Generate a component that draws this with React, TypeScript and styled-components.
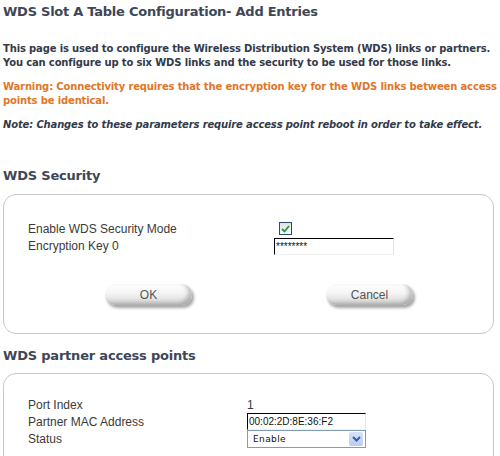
import React from 'react';
import styled, {createGlobalStyle} from 'styled-components';

const GlobalStyle = createGlobalStyle`
  body {
    margin: 0;
    background: #ffffff;
    font-family: "DejaVu Sans", Verdana, sans-serif;
  }
`;

const Page = styled.div`
  width: 500px;
  padding: 3px 0 0 3px;
  box-sizing: border-box;
`;

const Title = styled.h1`
  margin: 0;
  font-family: "DejaVu Sans", sans-serif;
  font-size: 13px;
  font-weight: bold;
  color: #3d4758;
  letter-spacing: -0.25px;
  line-height: 18px;
`;

const Para = styled.p<{tone?: string; italic?: boolean}>`
  margin: 0;
  font-family: "DejaVu Sans", sans-serif;
  font-size: 10px;
  font-weight: bold;
  line-height: 14px;
  letter-spacing: -0.15px;
  color: ${(p) => p.tone || '#333a48'};
  font-style: ${(p) => (p.italic ? 'italic' : 'normal')};
`;

const Intro = styled.div`
  margin-top: 21px;
  display: flex;
  flex-direction: column;
  gap: 10px;
`;

const Heading = styled.h2<{top: number}>`
  margin: ${(p) => p.top}px 0 0 0;
  font-family: "DejaVu Sans", sans-serif;
  font-size: 13px;
  font-weight: bold;
  color: #3d4758;
  line-height: 16px;
  letter-spacing: -0.2px;
`;

const Panel = styled.div<{height: number; top: number}>`
  margin-top: ${(p) => p.top}px;
  width: 491px;
  height: ${(p) => p.height}px;
  box-sizing: border-box;
  border: 1px solid #c8c8c8;
  border-radius: 13px;
  padding: 0 0 0 24px;
`;

const Fields = styled.div<{col: number; top: number}>`
  display: grid;
  grid-template-columns: ${(p) => p.col}px 1fr;
  margin-top: ${(p) => p.top}px;
  align-items: center;
`;

const Label = styled.div<{h: number}>`
  height: ${(p) => p.h}px;
  display: flex;
  align-items: center;
  font-family: "Liberation Sans", Arial, sans-serif;
  font-size: 12px;
  color: #3a3a3a;
`;

const Value = styled.div<{h: number}>`
  height: ${(p) => p.h}px;
  display: flex;
  align-items: center;
  font-family: "Liberation Sans", Arial, sans-serif;
  font-size: 12px;
  color: #3a3a3a;
`;

const Check = styled.span`
  margin-left: 5px;
  width: 11px;
  height: 11px;
  border: 1px solid #2c4a6c;
  background: linear-gradient(#dfe3e8, #f8f9fa);
  display: flex;
  align-items: center;
  justify-content: center;
`;

const TextBox = styled.div<{w: number}>`
  width: ${(p) => p.w}px;
  height: 17px;
  box-sizing: border-box;
  border-top: 1px solid #000;
  border-left: 1px solid #000;
  border-right: 1px solid #e4e4e4;
  border-bottom: 1px solid #f0f0f0;
  font-family: "Liberation Sans", Arial, sans-serif;
  font-size: 10px;
  color: #111;
  display: flex;
  align-items: center;
  padding-left: 1px;
`;

const Select = styled.div`
  width: 119px;
  height: 18px;
  box-sizing: border-box;
  border: 1px solid #7f9db9;
  display: flex;
  align-items: center;
  justify-content: space-between;
  padding: 0 2px 0 5px;
  font-family: "DejaVu Sans", sans-serif;
  font-size: 9px;
  letter-spacing: 0.4px;
  color: #111;
`;

const SelectArrow = styled.span`
  width: 14px;
  height: 14px;
  border-radius: 2px;
  background: linear-gradient(#d6e2fa, #b9cdf3);
  display: flex;
  align-items: center;
  justify-content: center;
`;

const Buttons = styled.div`
  display: flex;
  margin: 29px 0 0 77px;
  gap: 134px;
`;

const PillButton = styled.button`
  width: 87px;
  height: 21px;
  border: none;
  border-radius: 10px;
  background: linear-gradient(to bottom, #ffffff 0%, #f4f4f4 45%, #d4d4d4 100%);
  box-shadow: 2px 3px 3px rgba(0, 0, 0, 0.35), inset -4px -2px 4px rgba(0, 0, 0, 0.22);
  font-family: "Liberation Sans", Arial, sans-serif;
  font-size: 12px;
  color: #555;
  padding: 0;
`;

const App = () => {
  return (
    <Page>
      <GlobalStyle />
      <Title>WDS Slot A Table Configuration- Add Entries</Title>
      <Intro>
        <Para>
          This page is used to configure the Wireless Distribution System (WDS) links or partners.
          <br />
          You can configure up to six WDS links and the security to be used for those links.
        </Para>
        <Para tone="#e0762a">
          Warning: Connectivity requires that the encryption key for the WDS links between access
          <br />
          points be identical.
        </Para>
        <Para italic>Note: Changes to these parameters require access point reboot in order to take effect.</Para>
      </Intro>

      <Heading top={36}>WDS Security</Heading>
      <Panel height={140} top={10}>
        <Fields col={246} top={25}>
          <Label h={17}>Enable WDS Security Mode</Label>
          <Value h={17}>
            <Check>
              <svg width="9" height="8" viewBox="0 0 9 8">
                <path d="M1 4 L3.5 6.5 L8 1" stroke="#2f9a3a" strokeWidth="1.8" fill="none" />
              </svg>
            </Check>
          </Value>
          <Label h={18}>Encryption Key 0</Label>
          <Value h={18}>
            <TextBox w={120}>********</TextBox>
          </Value>
        </Fields>
        <Buttons>
          <PillButton>OK</PillButton>
          <PillButton>Cancel</PillButton>
        </Buttons>
      </Panel>

      <Heading top={14}>WDS partner access points</Heading>
      <Panel height={100} top={9}>
        <Fields col={219} top={23}>
          <Label h={16}>Port Index</Label>
          <Value h={16}>1</Value>
          <Label h={17}>Partner MAC Address</Label>
          <Value h={17}>
            <TextBox w={119}>00:02:2D:8E:36:F2</TextBox>
          </Value>
          <Label h={18}>Status</Label>
          <Value h={18}>
            <Select>
              Enable
              <SelectArrow>
                <svg width="9" height="6" viewBox="0 0 9 6">
                  <path d="M1 1 L4.5 4.5 L8 1" stroke="#3d5fa8" strokeWidth="2" fill="none" />
                </svg>
              </SelectArrow>
            </Select>
          </Value>
        </Fields>
      </Panel>
    </Page>
  );
};

export default App;
